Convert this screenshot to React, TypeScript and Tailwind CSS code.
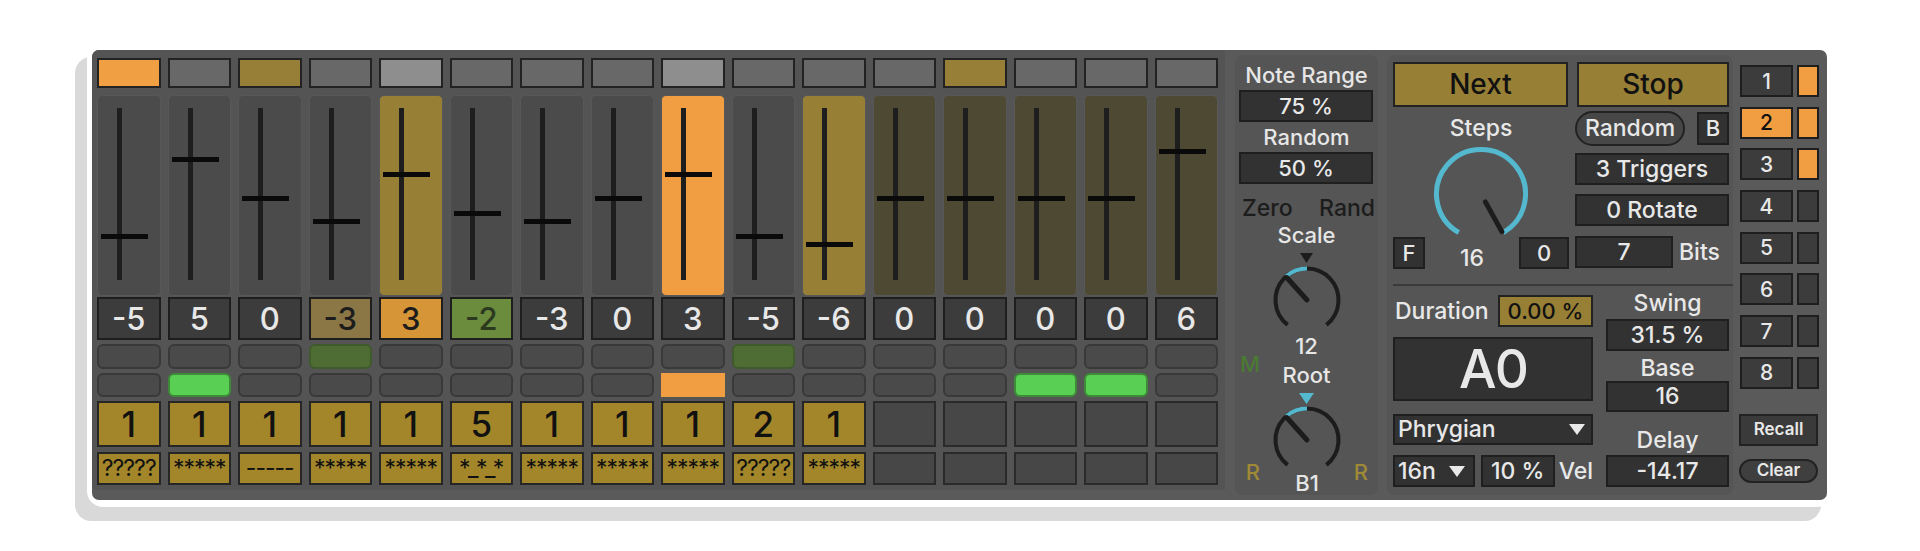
import React from 'react';

type Col = {
  top: string;
  sl: string;
  v: number;
  vb: string;
  t1: string;
  t2: string;
  n: string;
  p: string;
};

const TOP_G = 'bg-[#686868]';
const TOP_O = 'bg-[#f0a043]';
const TOP_Y = 'bg-[#977f38]';
const TOP_L = 'bg-[#8e8e8e]';
const SL_G = 'bg-[#4b4b4b]';
const SL_Y = 'bg-[#977f35]';
const SL_O = 'bg-[#f09e41]';
const SL_D = 'bg-[#4e4932]';
const VB_D = 'bg-[#3c3c3c] text-[#e8e8e8]';
const T_OFF = 'bg-[#4a4a4a] border-2 border-[#393939] rounded-[6px]';
const T_DG = 'bg-[#4e6d35] border-2 border-[#3f5a2b] rounded-[6px]';
const T_G = 'bg-[#59cf53] border-2 border-[#3d8a38] rounded-[6px]';
const T_O = 'bg-[#f09e41]';

const cols: Col[] = [
  { top: TOP_O, sl: SL_G, v: -5, vb: VB_D, t1: T_OFF, t2: T_OFF, n: '1', p: '?????' },
  { top: TOP_G, sl: SL_G, v: 5, vb: VB_D, t1: T_OFF, t2: T_G, n: '1', p: '*****' },
  { top: TOP_Y, sl: SL_G, v: 0, vb: VB_D, t1: T_OFF, t2: T_OFF, n: '1', p: '-----' },
  { top: TOP_G, sl: SL_G, v: -3, vb: 'bg-[#8b7646] text-[#1c1c1c]', t1: T_DG, t2: T_OFF, n: '1', p: '*****' },
  { top: TOP_L, sl: SL_Y, v: 3, vb: 'bg-[#d69637] text-[#1c1c1c]', t1: T_OFF, t2: T_OFF, n: '1', p: '*****' },
  { top: TOP_G, sl: SL_G, v: -2, vb: 'bg-[#6b8b3d] text-[#2b3a1e]', t1: T_OFF, t2: T_OFF, n: '5', p: '*_*_*' },
  { top: TOP_G, sl: SL_G, v: -3, vb: VB_D, t1: T_OFF, t2: T_OFF, n: '1', p: '*****' },
  { top: TOP_G, sl: SL_G, v: 0, vb: VB_D, t1: T_OFF, t2: T_OFF, n: '1', p: '*****' },
  { top: TOP_L, sl: SL_O, v: 3, vb: VB_D, t1: T_OFF, t2: T_O, n: '1', p: '*****' },
  { top: TOP_G, sl: SL_G, v: -5, vb: VB_D, t1: T_DG, t2: T_OFF, n: '2', p: '?????' },
  { top: TOP_G, sl: SL_Y, v: -6, vb: VB_D, t1: T_OFF, t2: T_OFF, n: '1', p: '*****' },
  { top: TOP_G, sl: SL_D, v: 0, vb: VB_D, t1: T_OFF, t2: T_OFF, n: '', p: '' },
  { top: TOP_Y, sl: SL_D, v: 0, vb: VB_D, t1: T_OFF, t2: T_OFF, n: '', p: '' },
  { top: TOP_G, sl: SL_D, v: 0, vb: VB_D, t1: T_OFF, t2: T_G, n: '', p: '' },
  { top: TOP_G, sl: SL_D, v: 0, vb: VB_D, t1: T_OFF, t2: T_G, n: '', p: '' },
  { top: TOP_G, sl: SL_D, v: 6, vb: VB_D, t1: T_OFF, t2: T_OFF, n: '', p: '' },
];

function polar(cx: number, cy: number, r: number, a: number): [number, number] {
  const t = (a * Math.PI) / 180;
  return [cx + r * Math.sin(t), cy - r * Math.cos(t)];
}

function arc(cx: number, cy: number, r: number, a1: number, a2: number) {
  const [x1, y1] = polar(cx, cy, r, a1);
  const [x2, y2] = polar(cx, cy, r, a2);
  const large = a2 - a1 > 180 ? 1 : 0;
  return `M ${x1} ${y1} A ${r} ${r} 0 ${large} 1 ${x2} ${y2}`;
}

function SmallKnob() {
  const [nx, ny] = polar(36, 36, 30, -42);
  return (
    <svg width="72" height="72" viewBox="0 0 72 72">
      <path d={arc(36, 36, 31.5, -142, 142)} fill="none" stroke="#1c1c1c" strokeWidth="4" />
      <path d={arc(36, 36, 31.5, -41, 0)} fill="none" stroke="#54b9cf" strokeWidth="4" />
      <line x1="36" y1="36" x2={nx} y2={ny} stroke="#1c1c1c" strokeWidth="5" strokeLinecap="round" />
    </svg>
  );
}

function BigKnob() {
  const [x1, y1] = polar(50, 49, 9, 151);
  const [x2, y2] = polar(50, 49, 43, 151);
  return (
    <svg width="100" height="92" viewBox="0 0 100 92">
      <path d={arc(50, 49, 44.5, -150, 150)} fill="none" stroke="#54b9cf" strokeWidth="5" />
      <line x1={x1} y1={y1} x2={x2} y2={y2} stroke="#1c1c1c" strokeWidth="5" strokeLinecap="round" />
    </svg>
  );
}

function DownTri({ w = 16, h = 11, color = '#e8e8e8' }: { w?: number; h?: number; color?: string }) {
  return (
    <svg width={w} height={h} viewBox={`0 0 ${w} ${h}`}>
      <polygon points={`0,0 ${w},0 ${w / 2},${h}`} fill={color} />
    </svg>
  );
}

function Column({ c }: { c: Col }) {
  const thumbTop = 99.5 - 7.7 * c.v;
  const hasNum = c.n !== '';
  return (
    <div className="flex-1 flex flex-col">
      <div className={`h-[30px] border-2 border-[#222222] ${c.top}`} />
      <div className={`mt-[7px] h-[201px] relative rounded-[5px] border border-[#585858] ${c.sl}`}>
        <div className="absolute left-[19px] top-[12px] w-[5px] h-[172px] bg-[#1e1e1e]" />
        <div className="absolute left-[3px] w-[47px] h-[5px] bg-[#0a0a0a]" style={{ top: thumbTop }} />
      </div>
      <div
        className={`mt-[1px] h-[43px] border-2 border-[#1e1e1e] flex items-center justify-center text-[31px] leading-none ${c.vb}`}
      >
        {c.v}
      </div>
      <div className={`mt-[4px] h-[25px] ${c.t1}`} />
      <div className={`mt-[4px] h-[24px] ${c.t2}`} />
      {hasNum ? (
        <div className="mt-[4px] h-[46px] border-2 border-[#262626] bg-[#a3862a] flex items-center justify-center text-[35px] leading-none text-[#111111]">
          {c.n}
        </div>
      ) : (
        <div className="mt-[4px] h-[46px] border-2 border-[#2a2a2a] bg-[#474747]" />
      )}
      {hasNum ? (
        <div className="mt-[5px] h-[33px] border-2 border-[#262626] bg-[#a3862a] flex items-center justify-center text-[23px] leading-none text-[#111111] overflow-hidden tracking-[-1px] font-normal whitespace-nowrap">
          {c.p}
        </div>
      ) : (
        <div className="mt-[5px] h-[33px] border-2 border-[#2a2a2a] bg-[#474747]" />
      )}
    </div>
  );
}

const BOX = 'bg-[#323232] border-2 border-[#1f1f1f] flex items-center justify-center text-[#e8e8e8]';

function Middle() {
  return (
    <div className="ml-[10px] w-[143px] h-full rounded-[8px] bg-[#555555] flex flex-col text-[#e6e6e6] text-[22px] leading-[22px] overflow-hidden">
      <div className="mt-[9px] h-[22px] text-center">Note Range</div>
      <div className={`mt-[4px] mx-[4px] mr-[5px] h-[32px] ${BOX}`}>75 %</div>
      <div className="mt-[4px] h-[22px] text-center">Random</div>
      <div className={`mt-[4px] mx-[4px] mr-[5px] h-[32px] ${BOX}`}>50 %</div>
      <div className="mt-[13px] h-[22px] flex justify-between pl-[7px] pr-[3px] text-[#1c1c1c] text-[23px]">
        <span>Zero</span>
        <span>Rand</span>
      </div>
      <div className="mt-[5px] h-[22px] text-center">Scale</div>
      <div className="mt-[7px] h-[10px] flex justify-center">
        <DownTri w={13} h={10} color="#1c1c1c" />
      </div>
      <div className="mt-[1px] flex justify-center">
        <SmallKnob />
      </div>
      <div className="grid grid-cols-[30px_1fr_30px] -mt-[1px]">
        <div className="self-center text-center text-[#4a7a33] pt-[6px]">M</div>
        <div className="flex flex-col items-center">
          <div className="h-[22px]">12</div>
          <div className="mt-[7px] h-[22px]">Root</div>
        </div>
        <div />
      </div>
      <div className="mt-[7px] h-[11px] flex justify-center">
        <DownTri w={15} h={11} color="#54b9cf" />
      </div>
      <div className="grid grid-cols-[36px_1fr_36px]">
        <div className="self-end text-center text-[#a08a35] mb-[10px]">R</div>
        <div className="flex flex-col items-center">
          <SmallKnob />
          <div className="-mt-[3px] h-[20px] leading-[20px]">B1</div>
        </div>
        <div className="self-end text-center text-[#a08a35] mb-[10px]">R</div>
      </div>
    </div>
  );
}

function RightPanel() {
  return (
    <div className="ml-[9px] w-[346px] h-full rounded-[8px] bg-[#555555] pt-[7px] text-[#e8e8e8] text-[23px] leading-[23px]">
      <div className="flex pl-[6px] pr-[4px] gap-[9px]">
        <div className="w-[175px] h-[45px] bg-[#977f35] border-2 border-[#222222] flex items-center justify-center text-[28px] text-[#111111]">
          Next
        </div>
        <div className="flex-1 h-[45px] bg-[#977f35] border-2 border-[#222222] flex items-center justify-center text-[28px] text-[#111111]">
          Stop
        </div>
      </div>
      <div className="flex pl-[6px] pr-[4px]">
        <div className="w-[176px] flex flex-col">
          <div className="mt-[10px] h-[22px] text-center">Steps</div>
          <div className="mt-[6px] flex justify-center">
            <BigKnob />
          </div>
          <div className="flex items-center h-[32px]">
            <div className={`w-[32px] h-[32px] ${BOX} text-[22px]`}>F</div>
            <div className="flex-1 text-center pt-[10px]">16</div>
            <div className={`w-[50px] h-[32px] ${BOX} text-[22px]`}>0</div>
          </div>
        </div>
        <div className="ml-[6px] flex-1 flex flex-col pt-[4px]">
          <div className="flex items-center h-[35px]">
            <div className="w-[110px] h-[35px] rounded-full bg-[#474747] border-2 border-[#222222] flex items-center justify-center">
              Random
            </div>
            <div className={`ml-auto w-[32px] h-[33px] ${BOX} text-[22px] bg-[#3a3a3a]`}>B</div>
          </div>
          <div className={`mt-[7px] h-[32px] ${BOX}`}>3 Triggers</div>
          <div className={`mt-[9px] h-[32px] ${BOX}`}>0 Rotate</div>
          <div className="mt-[10px] flex items-center h-[32px]">
            <div className={`w-[98px] h-[32px] ${BOX}`}>7</div>
            <div className="ml-[6px]">Bits</div>
          </div>
        </div>
      </div>
      <div className="mt-[15px] ml-[6px] h-[2px] bg-[#3a3a3a]" />
      <div className="flex pl-[6px] pr-[4px]">
        <div className="w-[200px] flex flex-col">
          <div className="mt-[9px] h-[32px] flex items-center">
            <div className="pl-[2px]">Duration</div>
            <div className="ml-auto w-[95px] h-[32px] bg-[#977f35] border-2 border-[#222222] flex items-center justify-center text-[#111111] text-[22px]">
              0.00 %
            </div>
          </div>
          <div className={`mt-[10px] h-[64px] ${BOX} text-[53px] tracking-[-2px]`}>A0</div>
          <div className="mt-[13px] h-[31px] bg-[#323232] border-2 border-[#1f1f1f] flex items-center pl-[3px] pr-[6px]">
            <span>Phrygian</span>
            <span className="ml-auto">
              <DownTri />
            </span>
          </div>
          <div className="mt-[10px] h-[32px] flex items-center">
            <div className="w-[85px] h-[32px] bg-[#323232] border-2 border-[#1f1f1f] flex items-center pl-[3px] pr-[8px]">
              <span>16n</span>
              <span className="ml-auto">
                <DownTri />
              </span>
            </div>
            <div className={`ml-[6px] w-[77px] h-[32px] ${BOX}`}>10 %</div>
            <div className="ml-[4px]">Vel</div>
          </div>
        </div>
        <div className="ml-[13px] flex-1 flex flex-col">
          <div className="mt-[6px] h-[22px] text-center">Swing</div>
          <div className={`mt-[5px] h-[32px] ${BOX}`}>31.5 %</div>
          <div className="mt-[6px] h-[22px] text-center">Base</div>
          <div className={`mt-[2px] h-[31px] ${BOX}`}>16</div>
          <div className="mt-[17px] h-[22px] text-center">Delay</div>
          <div className={`mt-[4px] h-[32px] ${BOX}`}>-14.17</div>
        </div>
      </div>
    </div>
  );
}

function Slots() {
  const rows = [1, 2, 3, 4, 5, 6, 7, 8];
  return (
    <div className="ml-[7px] w-[80px] pt-[10px] flex flex-col text-[21px] leading-none">
      <div className="flex flex-col gap-y-[9.7px]">
        {rows.map((r) => (
          <div key={r} className="flex h-[32px] gap-[4px]">
            <div
              className={`w-[53px] h-[32px] border-2 border-[#1e1e1e] flex items-center justify-center ${
                r === 2 ? 'bg-[#f09e41] text-[#111111]' : 'bg-[#3c3c3c] text-[#e8e8e8]'
              }`}
            >
              {r}
            </div>
            <div className={`w-[22px] h-[32px] border-2 border-[#1e1e1e] ${r <= 3 ? 'bg-[#f09e41]' : 'bg-[#3c3c3c]'}`} />
          </div>
        ))}
      </div>
      <div className="mt-[25px] -ml-[1px] w-[79px] h-[32px] bg-[#3a3a3a] border-2 border-[#222222] flex items-center justify-center text-[17px] font-semibold text-[#e8e8e8]">
        Recall
      </div>
      <div className="mt-[13px] -ml-[1px] w-[79px] h-[24px] rounded-full bg-[#3f3f3f] border-2 border-[#222222] flex items-center justify-center text-[17px] font-semibold text-[#e8e8e8]">
        Clear
      </div>
    </div>
  );
}

export default function App() {
  return (
    <div className="w-[1920px] h-[551px] bg-white pl-[87px] pt-[43px] overflow-hidden font-['Inter',sans-serif] font-medium">
      <div className="w-[1746px] h-[464px] rounded-[16px] bg-white shadow-[-12px_14px_0_0_#d9d9d9] pl-[5px] pt-[7px]">
        <div className="w-[1735px] h-[450px] rounded-[7px] bg-[#5a5a5a] flex py-[5px]">
          <div className="w-[1133px] h-full -mt-[5px] pt-[8px] bg-[#545454] rounded-l-[7px] pl-[5px] pr-[7px] flex gap-[7px]">
            {cols.map((c, i) => (
              <Column key={i} c={c} />
            ))}
          </div>
          <Middle />
          <RightPanel />
          <Slots />
        </div>
      </div>
    </div>
  );
}
